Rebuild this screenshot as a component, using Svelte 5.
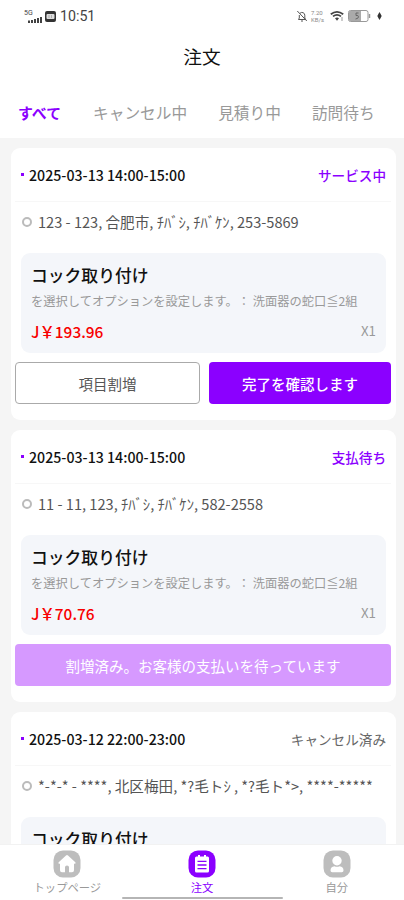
<script lang="ts">
  interface Order {
    time: string;
    status: string;
    active: boolean;
    address: string;
    price: string;
    actions: { label: string; kind: string }[];
  }

  const tabs = ['すべて', 'キャンセル中', '見積り中', '訪問待ち'];
  let current = $state(0);

  const orders: Order[] = [
    {
      time: '2025-03-13 14:00-15:00',
      status: 'サービス中',
      active: true,
      address: '123 - 123, 合肥市, ﾁﾊﾞｼ, ﾁﾊﾞｹﾝ, 253-5869',
      price: '193.96',
      actions: [
        { label: '項目割増', kind: 'outline' },
        { label: '完了を確認します', kind: 'primary' }
      ]
    },
    {
      time: '2025-03-13 14:00-15:00',
      status: '支払待ち',
      active: true,
      address: '11 - 11, 123, ﾁﾊﾞｼ, ﾁﾊﾞｹﾝ, 582-2558',
      price: '70.76',
      actions: [{ label: '割増済み。お客様の支払いを待っています', kind: 'waiting' }]
    },
    {
      time: '2025-03-12 22:00-23:00',
      status: 'キャンセル済み',
      active: false,
      address: '*-*-* - ****, 北区梅田, *?毛トｼ , *?毛ト*>, ****-*****',
      price: '70.76',
      actions: []
    }
  ];
</script>

<div class="screen">
  <div class="status-bar">
    <span class="network">5G</span>
    <svg class="signal" width="14" height="8" viewBox="0 0 14 8">
      <path d="M1 8V5.5M4 8V5M7 8V4M10 8V3M13 8V2" stroke="#222" stroke-width="1.7" />
    </svg>
    <svg class="hd" width="11" height="11" viewBox="0 0 11 11">
      <rect width="11" height="11" rx="2" fill="#333" />
      <rect x="1.5" y="3" width="8" height="5" rx="1" fill="#ddd" />
      <path d="M4 4v3M6.5 4v3" stroke="#999" stroke-width=".7" />
    </svg>
    <span class="clock">10:51</span>
    <svg class="bell" width="12" height="12" viewBox="0 0 12 12" fill="none" stroke="#555">
      <path d="M2.5 9.5h7.2L8.8 8V5.2A2.8 2.8 0 0 0 4 3.3M3.3 5v3l-.8 1.5M5 11h2M1.3 1l9.5 10" />
    </svg>
    <span class="speed"><span>7.20</span><span>KB/s</span></span>
    <svg class="wifi" width="14" height="12" viewBox="0 0 14 12" fill="none" stroke="#444" stroke-width="1.8">
      <path d="M.8 4.2Q7-.6 13.2 4.2M3 6.4Q7 3.3 11 6.4" />
      <path d="M5 8.3Q7 6.8 9 8.3L7 10.8Z" fill="#444" stroke="none" />
      <path d="M12 7v4" stroke="#999" stroke-width="1" />
    </svg>
    <svg class="battery" width="23" height="12" viewBox="0 0 23 12">
      <rect x=".5" y=".5" width="19.5" height="11" rx="2" fill="#fff" stroke="#999" />
      <path d="M1 2a1 1 0 0 1 1-1h11v10H2a1 1 0 0 1-1-1Z" fill="#aaa" />
      <path d="M21.5 4v4" stroke="#999" stroke-width="1.5" />
      <path d="M10.5 3H8v2.5q2.5-.5 2.5 1.3T7.5 9" fill="none" stroke="#666" />
    </svg>
    <svg class="bolt" width="5" height="8" viewBox="0 0 5 8">
      <path d="M2.5 0 .3 4l2.2 4 2.2-4Z" fill="#333" />
    </svg>
  </div>

  <header>注文</header>

  <nav class="tabs">
    {#each tabs as tab, i}
      <button class="tab" class:selected={current === i} onclick={() => (current = i)}>{tab}</button>
    {/each}
  </nav>

  <main class="orders">
    {#each orders as order}
      <article class="card">
        <div class="card-head">
          <span class="dot"></span>
          <span class="time">{order.time}</span>
          <span class="status" class:active={order.active}>{order.status}</span>
        </div>
        <div class="address">
          <span class="ring"></span>
          <span class="address-text">{order.address}</span>
        </div>
        <section class="item">
          <h2>コック取り付け</h2>
          <p class="options">を選択してオプションを設定します。： 洗面器の蛇口≦2組</p>
          <div class="price-row">
            <span class="price">J￥{order.price}</span>
            <span class="quantity">X1</span>
          </div>
        </section>
        <div class="actions">
          {#each order.actions as action}
            <button class="action {action.kind}">{action.label}</button>
          {/each}
        </div>
      </article>
    {/each}
  </main>

  <nav class="bottom-bar">
    <div class="nav-item">
      <svg width="28" height="28" viewBox="0 0 28 28">
        <rect x=".5" y=".5" width="27" height="27" rx="9.5" fill="#bdbdbd" />
        <path d="M13 5.5q1-.8 2 0l7.3 6.7q1.2 1.3-.6 1.5h-.7v6.6q0 2-2 2h-3v-5q0-1.8-2-1.8t-2 1.8v5H9q-2 0-2-2v-6.6h-.7q-1.8-.2-.6-1.5Z" fill="#fff" />
      </svg>
      <span>トップページ</span>
    </div>
    <div class="nav-item selected">
      <svg width="28" height="28" viewBox="0 0 28 28">
        <rect x=".5" y=".5" width="27" height="27" rx="9.5" fill="#8b00ff" />
        <path d="M8.5 6.5H10V5h2v1.5h4V5h2v1.5h1.5q1.5 0 1.5 1.5v13q0 1.5-1.5 1.5h-11Q7 22.5 7 21V8q0-1.5 1.5-1.5Z" fill="#fff" />
        <path d="M9.5 11.3h9M9.5 15h9M9.5 18.7h9" stroke="#8b00ff" stroke-width="1.3" />
      </svg>
      <span>注文</span>
    </div>
    <div class="nav-item">
      <svg width="28" height="28" viewBox="0 0 28 28">
        <rect x=".5" y=".5" width="27" height="27" rx="9.5" fill="#bdbdbd" />
        <circle cx="14" cy="10.8" r="4.7" fill="#fff" />
        <path d="M7.5 20.5q0-4 4-4.3 2.5 1.3 5 0 4 .3 4 4.3 0 1.7-1.7 1.7H9.2q-1.7 0-1.7-1.7Z" fill="#fff" />
      </svg>
      <span>自分</span>
    </div>
    <div class="home-indicator"></div>
  </nav>
</div>

<style>
  .screen {
    display: flex;
    flex-direction: column;
    width: 404px;
    height: 900px;
    overflow: hidden;
    background: #fff;
    color: #111;
    font-family: 'Noto Sans CJK JP', sans-serif;
    text-spacing-trim: space-all;
  }

  button {
    font: inherit;
    border: none;
    padding: 0;
    cursor: pointer;
    white-space: nowrap;
  }

  .status-bar {
    display: flex;
    align-items: center;
    flex-shrink: 0;
    height: 32px;
    padding: 0 22px 0 24px;
  }

  .network {
    width: 4px;
    font-family: Roboto, sans-serif;
    font-size: 7px;
    line-height: 8px;
    margin-bottom: 7px;
    color: #444;
  }

  .signal {
    margin: 6px 3px 0 0;
  }

  .clock {
    flex: 1;
    margin-left: 4px;
    font-family: Roboto, sans-serif;
    font-size: 14.2px;
    color: #444;
  }

  .speed {
    display: flex;
    flex-direction: column;
    width: 14px;
    margin: 0 5px 0 3px;
    font-family: Roboto, sans-serif;
    font-size: 6px;
    line-height: 7px;
    color: #888;
  }

  .battery {
    margin-left: 4px;
  }

  .bolt {
    margin-left: 6px;
  }

  header {
    flex-shrink: 0;
    height: 48px;
    line-height: 48px;
    font-size: 18.7px;
    text-align: center;
  }

  .tabs {
    display: flex;
    align-items: center;
    flex-shrink: 0;
    box-sizing: border-box;
    height: 58px;
    padding: 8px 0 0 18px;
    gap: 31px;
  }

  .tab {
    background: none;
    font-size: 15.7px;
    line-height: 50px;
    color: #999;
  }

  .tab.selected {
    margin-right: 1px;
    font-size: 14.9px;
    font-weight: 700;
    color: #8b00ff;
  }

  .orders {
    display: flex;
    flex-direction: column;
    flex: 1;
    gap: 10px;
    min-height: 0;
    padding: 10px 8px 0 11px;
    overflow: hidden;
    background: #f5f5f5;
  }

  .card {
    box-sizing: border-box;
    flex-shrink: 0;
    height: 272px;
    padding: 0 5px 0 4px;
    border-radius: 9px;
    background: #fff;
  }

  .card-head {
    box-sizing: border-box;
    display: flex;
    align-items: center;
    height: 54px;
    padding: 0 5px 0 6px;
    border-bottom: 1px solid #f7f7f7;
  }

  .dot {
    width: 3px;
    height: 3px;
    margin-right: 5px;
    background: #8b00ff;
  }

  .time {
    flex: 1;
    font-size: 14.2px;
    font-weight: 500;
  }

  .status {
    font-size: 13.6px;
    color: #666;
  }

  .status.active {
    font-weight: 500;
    color: #8b00ff;
  }

  .address {
    display: flex;
    align-items: center;
    height: 40px;
    padding-left: 7px;
    font-size: 14.6px;
    color: #555;
  }

  .address-text {
    padding-bottom: 2px;
    white-space: pre;
  }

  .ring {
    box-sizing: border-box;
    width: 10px;
    height: 10px;
    margin-right: 6px;
    border: 2px solid #bbb;
    border-radius: 50%;
  }

  .item {
    box-sizing: border-box;
    height: 100px;
    margin: 11px 5px 9px 6px;
    padding: 9px 10px 0;
    border-radius: 9px;
    background: #f4f6fa;
  }

  h2 {
    margin: 0;
    font-size: 16.8px;
    font-weight: 500;
    line-height: 26px;
  }

  .options {
    margin: 0;
    font-size: 12.25px;
    line-height: 26px;
    color: #999;
    white-space: nowrap;
  }

  .price-row {
    display: flex;
    justify-content: space-between;
    align-items: center;
    height: 33px;
  }

  .price {
    font-size: 15.4px;
    font-weight: 500;
    color: #f80000;
  }

  .quantity {
    font-size: 13.3px;
    color: #999;
  }

  .actions {
    display: flex;
    gap: 9px;
  }

  .action {
    box-sizing: border-box;
    flex: 1;
    height: 42px;
    border-radius: 4px;
    font-size: 14.5px;
    color: #fff;
  }

  .action.outline {
    flex: 0 0 185px;
    border: 1px solid #aaa;
    background: #fff;
    color: #555;
  }

  .action.primary {
    background: #8b00ff;
    font-weight: 500;
  }

  .action.waiting {
    background: #d699ff;
  }

  .bottom-bar {
    position: relative;
    box-sizing: border-box;
    display: flex;
    flex-shrink: 0;
    height: 56px;
    border-top: 1px solid #f2f2f2;
    background: #fff;
  }

  .nav-item {
    display: flex;
    flex-direction: column;
    align-items: center;
    flex: 1;
    padding-top: 5px;
    font-size: 11.3px;
    line-height: 18px;
    color: #999;
  }

  .nav-item.selected {
    color: #8b00ff;
  }

  .home-indicator {
    position: absolute;
    bottom: 1px;
    left: 122px;
    width: 161px;
    height: 2px;
    border-radius: 1px;
    background: #b5b5b5;
  }
</style>
